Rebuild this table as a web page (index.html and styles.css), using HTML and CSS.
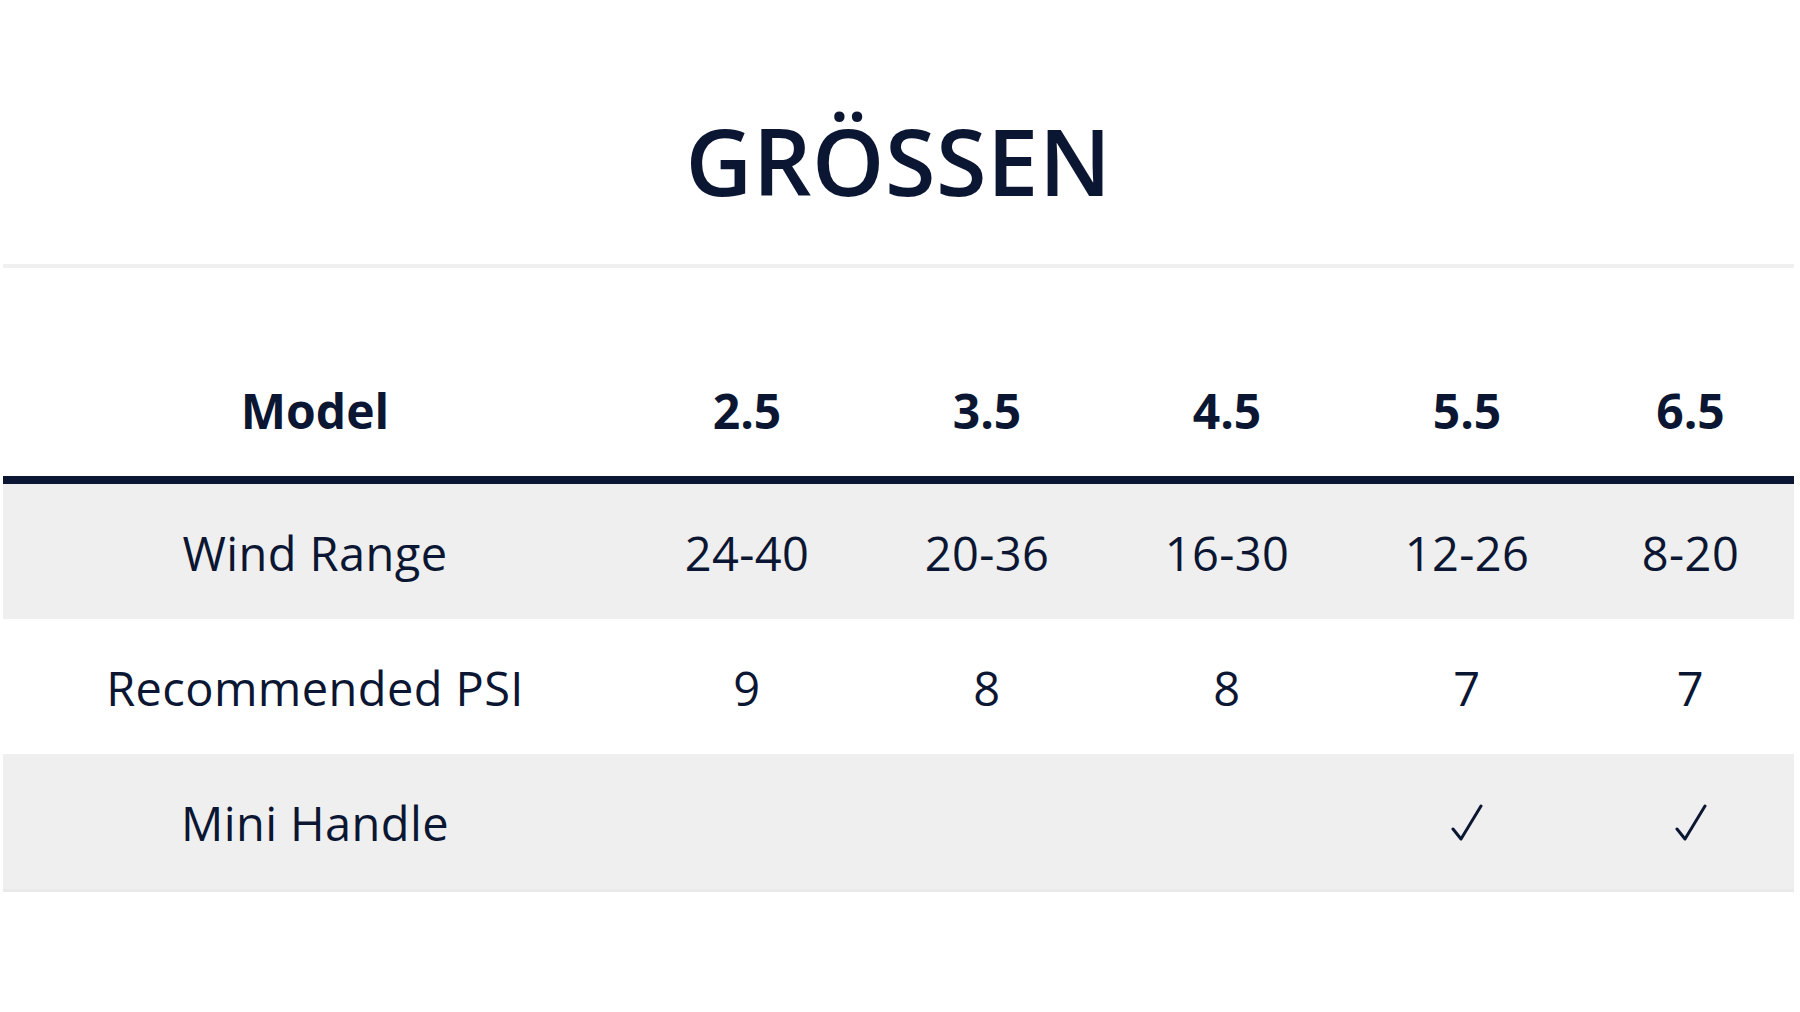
FILE: index.html
```html
<!DOCTYPE html>
<html lang="de">
<head>
<meta charset="utf-8">
<title>Größen</title>
<link rel="stylesheet" href="styles.css">
</head>
<body>
<section class="sizes">
  <h1 class="sizes-title">GRÖSSEN</h1>
  <div class="divider"></div>
  <table class="size-table">
    <colgroup>
      <col class="col-label">
      <col class="col-size">
      <col class="col-size">
      <col class="col-size">
      <col class="col-size">
      <col class="col-last">
    </colgroup>
    <thead>
      <tr>
        <th>Model</th>
        <th>2.5</th>
        <th>3.5</th>
        <th>4.5</th>
        <th>5.5</th>
        <th>6.5</th>
      </tr>
    </thead>
    <tbody>
      <tr class="shaded">
        <td>Wind Range</td>
        <td>24-40</td>
        <td>20-36</td>
        <td>16-30</td>
        <td>12-26</td>
        <td>8-20</td>
      </tr>
      <tr>
        <td>Recommended PSI</td>
        <td>9</td>
        <td>8</td>
        <td>8</td>
        <td>7</td>
        <td>7</td>
      </tr>
      <tr class="shaded">
        <td>Mini Handle</td>
        <td></td>
        <td></td>
        <td></td>
        <td><svg class="check" viewBox="0 0 32 38" width="32" height="38" aria-label="✓"><path d="M2 25 L10 35 L30 2" fill="none" stroke="#0b1633" stroke-width="3" stroke-linecap="round" stroke-linejoin="round"/></svg></td>
        <td><svg class="check" viewBox="0 0 32 38" width="32" height="38" aria-label="✓"><path d="M2 25 L10 35 L30 2" fill="none" stroke="#0b1633" stroke-width="3" stroke-linecap="round" stroke-linejoin="round"/></svg></td>
      </tr>
    </tbody>
  </table>
</section>
</body>
</html>
```

FILE: styles.css
```css
html, body {
  margin: 0;
  padding: 0;
  background: #ffffff;
}

body {
  font-family: "Open Sans", "Noto Sans", "Liberation Sans", sans-serif;
  color: #0b1633;
}

.sizes {
  padding: 106px 6px 0 3px;
}

.sizes-title {
  margin: 0;
  text-align: center;
  font-size: 92px;
  font-weight: 600;
  line-height: 1.2;
  letter-spacing: 0.5px;
  color: #0b1633;
}

.divider {
  height: 4px;
  margin-top: 48px;
  background: #f0f0f0;
}

.size-table {
  width: 1791px;
  table-layout: fixed;
  border-collapse: separate;
  border-spacing: 0;
  border-bottom: 3px solid #e9e9e9;
}

.col-label { width: 624px; }
.col-size { width: 240px; }
.col-last { width: 207px; }

.size-table th {
  padding: 114px 0 36px;
  font-size: 48px;
  font-weight: 700;
  line-height: 1.2;
  text-align: center;
  border-bottom: 8px solid #0b1633;
  color: #0b1633;
}

.size-table td {
  height: 131px;
  padding: 4px 0 0;
  font-size: 47px;
  font-weight: 400;
  line-height: 1.2;
  letter-spacing: 0.4px;
  text-align: center;
  vertical-align: middle;
  color: #0b1633;
}

.size-table tr.shaded td {
  background: #efefef;
}

.check {
  display: block;
  margin: 0 auto;
}
```
